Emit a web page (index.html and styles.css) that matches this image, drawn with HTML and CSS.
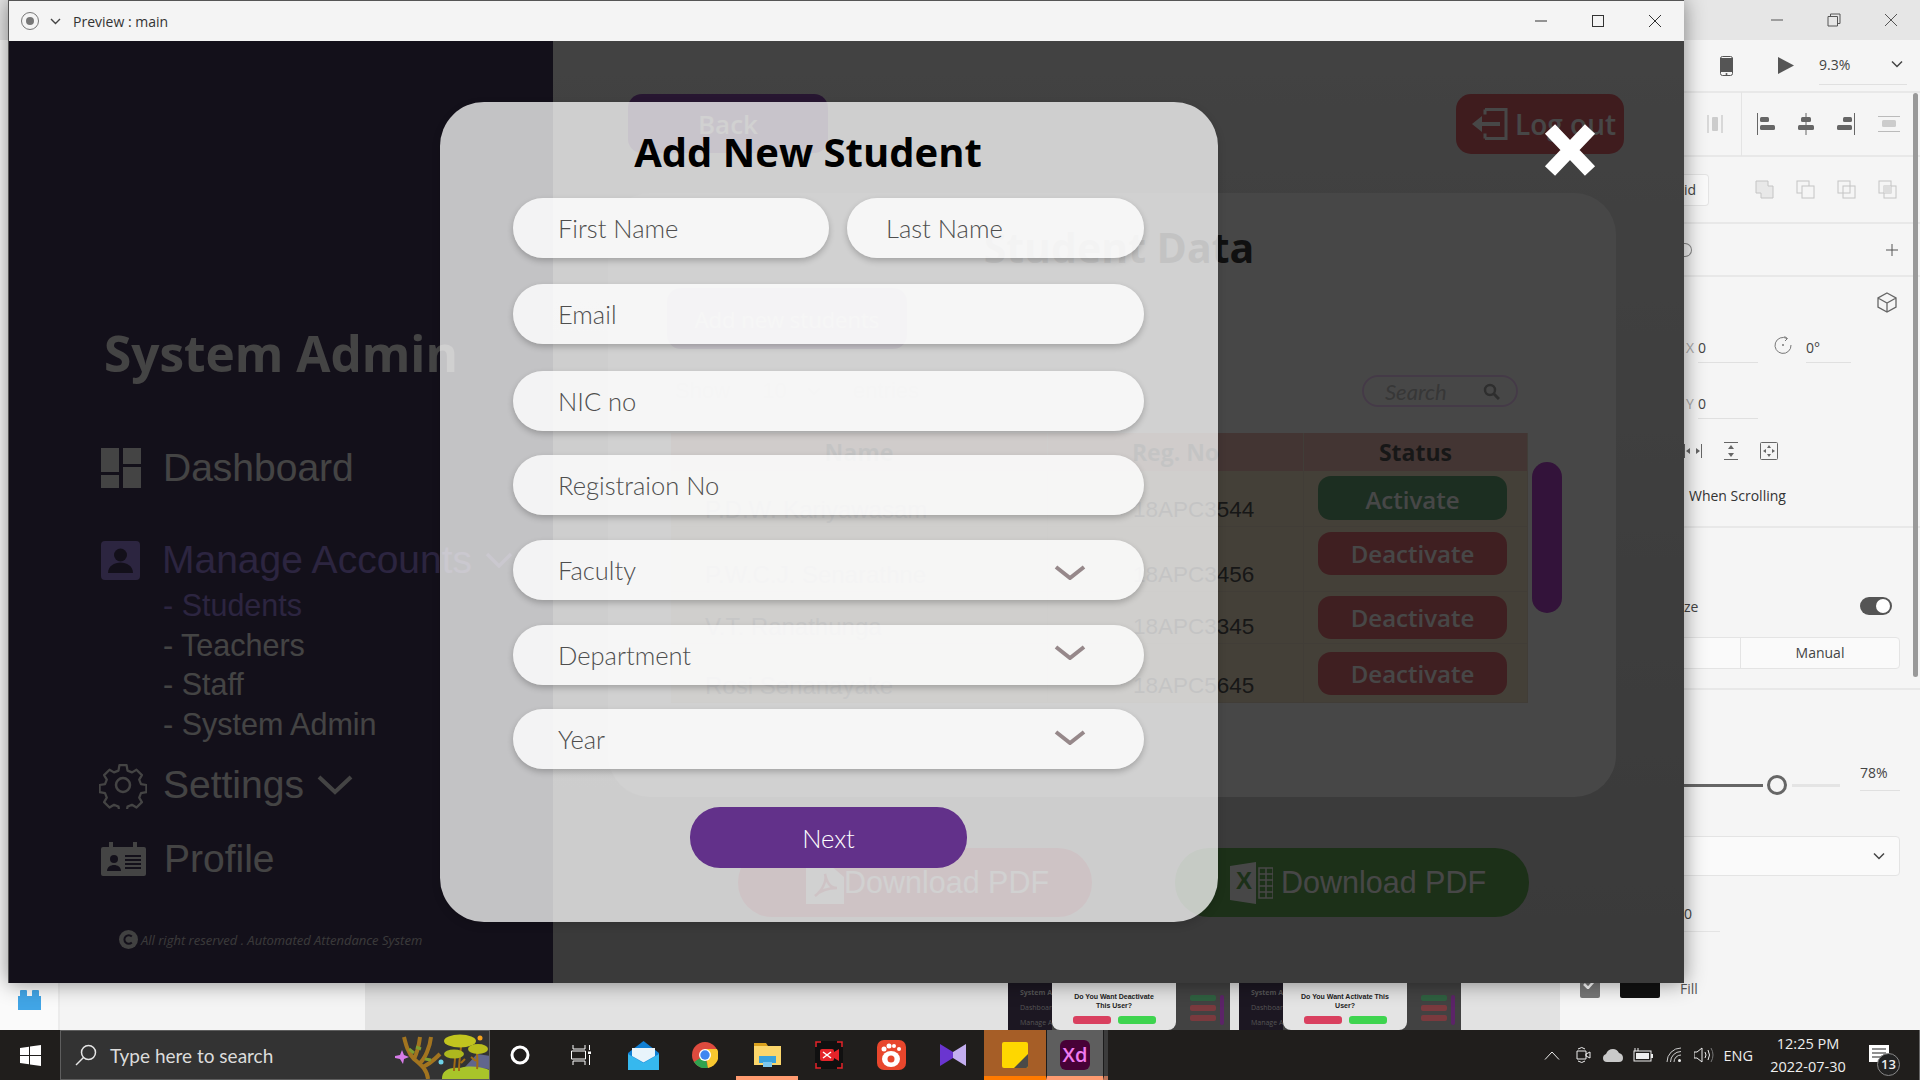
FILE: index.html
```html
<!DOCTYPE html>
<html lang="en">
<head>
  <meta charset="UTF-8">
  <title>Preview : main</title>
  <link rel="stylesheet" href="styles.css">
</head>
<body>
  <!-- editor window behind the preview -->
  <div class="xd">
    <div class="xd-titlebar">
      <svg class="cap" width="14" height="14" viewBox="0 0 14 14"><path d="M1 7h12" stroke="#555" fill="none"/></svg>
      <svg class="cap" width="14" height="14" viewBox="0 0 14 14"><path d="M1 3.500h9.500V13H1zM3.500 3.500V1H13v9.500h-2.500" stroke="#555" fill="none"/></svg>
      <svg class="cap" width="14" height="14" viewBox="0 0 14 14"><path d="M1 1l12 12M13 1L1 13" stroke="#555" fill="none"/></svg>
    </div>
    <div class="xd-body">
      <div class="rail">
        <svg width="23" height="20" viewBox="0 0 23 20"><path d="M0 6h2V1q0-1 1-1h5q1 0 1 1v5h5V1q0-1 1-1h5q1 0 1 1v5h2v14H0z" fill="#41a5e6"/></svg>
      </div>
      <div class="layers"></div>
      <div class="canvas">
        <div class="thumb">
          <div class="thumb-side"><b>System Admin</b><span>Dashboard</span><span>Manage Accounts</span></div>
          <div class="thumb-modal">
            <p>Do You Want Deactivate<br>This User?</p>
            <div class="thumb-btns"><i class="no"></i><i class="yes"></i></div>
          </div>
          <div class="thumb-main"><div class="thumb-col"><i class="go"></i><i></i><i></i></div><span class="thumb-bar"></span></div>
        </div>
        <div class="thumb">
          <div class="thumb-side"><b>System Admin</b><span>Dashboard</span><span>Manage Accounts</span></div>
          <div class="thumb-modal">
            <p>Do You Want Activate This<br>User?</p>
            <div class="thumb-btns"><i class="no"></i><i class="yes"></i></div>
          </div>
          <div class="thumb-main"><div class="thumb-col"><i class="go"></i><i></i><i></i></div><span class="thumb-bar"></span></div>
        </div>
      </div>
      <div class="panel">
        <section class="p-tools">
          <svg width="13" height="20" viewBox="0 0 13 20"><rect x=".5" y=".5" width="12" height="19" rx="2" fill="#f5f5f5" stroke="#555"/><rect y="2" width="13" height="14" fill="#555"/><circle cx="6.500" cy="18" r="1" fill="#555"/></svg>
          <svg class="p-play" width="16" height="17" viewBox="0 0 16 17"><path d="M0 0l16 8.500L0 17z" fill="#555"/></svg>
          <div class="p-zoom"><span>9.3%</span><svg width="12" height="8" viewBox="0 0 12 8"><path d="M1 1.500l5 5 5-5" stroke="#444" stroke-width="1.500" fill="none"/></svg></div>
        </section>
        <section class="p-align">
          <svg class="al-first" width="16" height="20" viewBox="0 0 16 20"><path d="M1 1v18M15 1v18" stroke="#bbb"/><rect x="5" y="3" width="6" height="14" rx="1" fill="#ccc"/></svg>
          <div class="al-sep"></div>
          <svg width="18" height="22" viewBox="0 0 18 22"><path d="M.500 0v22" stroke="#666"/><rect x="3" y="4" width="9" height="5" rx="1.500" fill="#666"/><rect x="3" y="12" width="15" height="5" rx="1.500" fill="#666"/></svg>
          <svg width="16" height="22" viewBox="0 0 16 22"><path d="M8 0v22" stroke="#666"/><rect x="3" y="4" width="10" height="5" rx="1.500" fill="#666"/><rect y="12" width="16" height="5" rx="1.500" fill="#666"/></svg>
          <svg width="18" height="22" viewBox="0 0 18 22"><path d="M17.500 0v22" stroke="#666"/><rect x="6" y="4" width="9" height="5" rx="1.500" fill="#666"/><rect y="12" width="15" height="5" rx="1.500" fill="#666"/></svg>
          <svg width="22" height="16" viewBox="0 0 22 16"><path d="M0 .500h22M0 15.500h22" stroke="#bbb"/><rect x="4" y="4" width="14" height="7" rx="1.500" fill="#ccc"/></svg>
        </section>
        <section class="p-paths">
          <div class="p-chip">id</div>
          <svg width="19" height="19" viewBox="0 0 19 19"><path d="M1 1h12v5h5v12H6v-5H1z" fill="#e8e8e8" stroke="#c4c4c4"/></svg>
          <svg width="19" height="19" viewBox="0 0 19 19"><rect x="1" y="1" width="12" height="12" fill="none" stroke="#c4c4c4"/><rect x="6" y="6" width="12" height="12" fill="#f5f5f5" stroke="#c4c4c4"/></svg>
          <svg width="19" height="19" viewBox="0 0 19 19"><rect x="1" y="1" width="12" height="12" fill="none" stroke="#c4c4c4"/><rect x="6" y="6" width="12" height="12" fill="none" stroke="#c4c4c4"/></svg>
          <svg width="19" height="19" viewBox="0 0 19 19"><rect x="1" y="1" width="12" height="12" fill="none" stroke="#c4c4c4"/><rect x="6" y="6" width="12" height="12" fill="none" stroke="#c4c4c4"/><rect x="6" y="6" width="7" height="7" fill="#ddd"/></svg>
        </section>
        <section class="p-plus">
          <span class="p-ring"></span>
          <svg width="12" height="12" viewBox="0 0 12 12"><path d="M6 0v12M0 6h12" stroke="#555"/></svg>
        </section>
        <section class="p-transform">
          <div class="t-cube">
            <svg width="20" height="21" viewBox="0 0 20 21"><path d="M10 1l9 5v9l-9 5-9-5V6zM1 6l9 5 9-5M10 11v9" stroke="#666" stroke-width="1.300" fill="none"/></svg>
          </div>
          <div class="t-row">
            <span class="t-axis">X</span>
            <span class="t-val">0</span>
            <svg class="t-rot" width="18" height="18" viewBox="0 0 18 18"><path d="M13 2.500A8 8 0 1 0 17 9" stroke="#777" fill="none"/><path d="M10.500.500l3 2-2.500 2.500" stroke="#777" fill="none"/><circle cx="9" cy="9" r="1" fill="#777"/></svg>
            <span class="t-val t-deg">0°</span>
          </div>
          <div class="t-row t-row-y"><span class="t-axis">Y</span><span class="t-val">0</span></div>
          <div class="t-icons">
            <svg width="18" height="16" viewBox="0 0 18 16"><path d="M.500 1v14M17.500 1v14" stroke="#666"/><path d="M2 8l4-3v6zM16 8l-4-3v6z" fill="#666"/></svg>
            <svg width="16" height="18" viewBox="0 0 16 18"><path d="M1 .500h14M1 17.500h14" stroke="#666"/><path d="M8 3l3 4H5zM8 15l3-4H5z" fill="#666"/></svg>
            <svg width="18" height="18" viewBox="0 0 18 18"><rect x=".5" y=".5" width="17" height="17" rx="1" fill="none" stroke="#666"/><path d="M9 3l2 3H7zM9 15l2-3H7zM3 9l3-2v4zM15 9l-3-2v4z" fill="#666"/></svg>
          </div>
          <div class="t-label">When Scrolling</div>
        </section>
        <section class="p-resp">
          <div class="r-toggle-row"><span>ze</span><span class="toggle"><i></i></span></div>
          <div class="r-tabs"><span class="r-tab"></span><span class="r-tab r-tab-on">Manual</span></div>
        </section>
        <section class="p-look">
          <div class="l-slider">
            <span class="l-fill"></span><span class="l-knob"></span><span class="l-rest"></span>
            <span class="l-val">78%</span>
          </div>
          <div class="l-select"><svg width="12" height="8" viewBox="0 0 12 8"><path d="M1 1.500l5 5 5-5" stroke="#444" stroke-width="1.500" fill="none"/></svg></div>
          <div class="l-num">0</div>
          <div class="l-fillrow">
            <span class="l-check"><svg width="14" height="11" viewBox="0 0 14 11"><path d="M1 6l4 4 8-9" stroke="#fff" stroke-width="2.500" fill="none"/></svg></span>
            <span class="l-swatch"></span>
            <span class="l-fillname">Fill</span>
          </div>
        </section>
        <div class="p-scroll"></div>
      </div>
    </div>
  </div>

  <!-- preview window -->
  <div class="preview">
    <div class="pv-title">
      <svg width="20" height="20" viewBox="0 0 20 20"><circle cx="10" cy="10" r="8.500" fill="none" stroke="#777"/><circle cx="10" cy="10" r="4" fill="#777"/></svg>
      <svg class="pv-chev" width="11" height="7" viewBox="0 0 11 7"><path d="M1 1l4.500 4.500L10 1" stroke="#444" stroke-width="1.400" fill="none"/></svg>
      <span class="pv-name">Preview : main</span>
      <div class="pv-caps">
        <svg width="12" height="12" viewBox="0 0 12 12"><path d="M0 6h12" stroke="#333"/></svg>
        <svg width="12" height="12" viewBox="0 0 12 12"><rect x=".5" y=".5" width="11" height="11" fill="none" stroke="#333"/></svg>
        <svg width="12" height="12" viewBox="0 0 12 12"><path d="M0 0l12 12M12 0L0 12" stroke="#333"/></svg>
      </div>
    </div>
    <div class="pv-content">
      <aside class="sidebar">
        <h2 class="side-title">System Admin</h2>
        <div class="side-item side-dash">
          <svg class="side-icon" width="40" height="40" viewBox="0 0 40 40"><path d="M0 0h18v24H0zM22 0h18v16H22zM0 27h18v13H0zM22 19h18v21H22z" fill="#f2f2f2"/></svg>
          <span>Dashboard</span>
        </div>
        <div class="side-item side-on side-manage">
          <svg class="side-icon" width="39" height="39" viewBox="0 0 39 39"><rect width="39" height="39" rx="4" fill="#9d84e4"/><circle cx="19.500" cy="14" r="6.500" fill="#47395d"/><path d="M7 32c0-14 25-14 25 0z" fill="#47395d"/></svg>
          <span>Manage Accounts</span>
          <svg class="side-chev" width="28" height="16" viewBox="0 0 28 16"><path d="M2 2l12 12L26 2" stroke="#9d84e4" stroke-width="3.500" fill="none"/></svg>
        </div>
        <ul class="side-sub">
          <li class="side-on">- Students</li>
          <li>- Teachers</li>
          <li>- Staff</li>
          <li>- System Admin</li>
        </ul>
        <div class="side-item side-settings">
          <svg class="side-icon" width="48" height="48" viewBox="0 0 48 48"><path d="M20 2h8l1 6 5 2 5-3 6 6-3 5 2 5 6 1v8l-6 1-2 5 3 5-6 6-5-3-5 2-1 6h-8l-1-6-5-2-5 3-6-6 3-5-2-5-6-1v-8l6-1 2-5-3-5 6-6 5 3 5-2z" transform="translate(2.400 2.400) scale(.9)" fill="none" stroke="#f2f2f2" stroke-width="2.500" stroke-linejoin="round"/><circle cx="24" cy="24" r="7" fill="none" stroke="#f2f2f2" stroke-width="2.500"/></svg>
          <span>Settings</span>
          <svg class="side-chev-s" width="36" height="20" viewBox="0 0 36 20"><path d="M2 2l16 15L34 2" stroke="#f2f2f2" stroke-width="4" fill="none"/></svg>
        </div>
        <div class="side-item side-profile">
          <svg class="side-icon" width="45" height="34" viewBox="0 0 45 34"><path d="M2 5h6V0h4v5h20V0h4v5h7q2 0 2 2v25q0 2-2 2H2q-2 0-2-2V7q0-2 2-2z" fill="#f2f2f2"/><circle cx="13" cy="17" r="4" fill="#47395d"/><path d="M6 29c0-8 14-8 14 0z" fill="#47395d"/><path d="M24 14h16M24 18h16M24 22h16M24 26h16" stroke="#47395d" stroke-width="2"/></svg>
          <span>Profile</span>
        </div>
        <div class="side-foot">
          <svg width="19" height="19" viewBox="0 0 19 19"><circle cx="9.500" cy="9.500" r="9.500" fill="#e8e8e8"/><path d="M12.800 6.500a4.300 4.300 0 1 0 0 6" stroke="#47395d" stroke-width="2" fill="none"/></svg>
          <em>All right reserved . Automated Attendance System</em>
        </div>
      </aside>

      <main class="main">
        <div class="top-row">
          <button class="btn-back">Back</button>
          <button class="btn-logout">
            <svg width="36" height="32" viewBox="0 0 36 32"><path d="M13 1.500h21v29H13M13 1.500v5M13 30.500v-5" stroke="#fff" stroke-width="3" fill="none"/><path d="M28 16H6" stroke="#fff" stroke-width="4"/><path d="M0 16l10-8v16z" fill="#fff"/></svg>
            <span>Log out</span>
          </button>
        </div>
        <div class="card">
          <h1 class="card-title">Student Data</h1>
          <button class="btn-add">Add new students</button>
          <div class="tools-row">
            <div class="show">Show <span class="show-box">10 <svg width="14" height="8" viewBox="0 0 14 8"><path d="M1 1l6 6 6-6" stroke="#bbb" stroke-width="1.500" fill="none"/></svg></span> entries</div>
            <div class="search">
              <em>Search</em>
              <svg width="17" height="17" viewBox="0 0 17 17"><circle cx="7" cy="7" r="5" fill="none" stroke="#a5a5a5" stroke-width="2.500"/><path d="M11 11l5 5" stroke="#a5a5a5" stroke-width="3"/></svg>
            </div>
          </div>
          <div class="table-wrap">
            <div class="grid">
              <div class="th">Name</div><div class="th">Reg. No</div><div class="th">Status</div>
              <div class="td">P.D.W. Kariyawasam</div><div class="td td-reg">18APC3544</div><div class="td-btn"><span class="st st-on">Activate</span></div>
              <div class="td">P.W.C.J. Senarathne</div><div class="td td-reg">18APC3456</div><div class="td-btn"><span class="st">Deactivate</span></div>
              <div class="td">V.T. Ranathunga</div><div class="td td-reg">18APC3345</div><div class="td-btn td-btn-a"><span class="st">Deactivate</span></div>
              <div class="td">Rosi Senanayake</div><div class="td td-reg">18APC5645</div><div class="td-btn td-btn-b"><span class="st">Deactivate</span></div>
            </div>
            <div class="scroll-thumb"></div>
          </div>
        </div>
        <div class="downloads">
          <button class="dl dl-pdf">
            <svg width="38" height="42" viewBox="0 0 38 42"><path d="M0 3h24l14 12v27H0z" fill="#fff"/><path d="M9 34c8-6 12-16 10-22 2 10 6 14 12 14-8 0-16 2-22 8z" fill="none" stroke="#e0405f" stroke-width="2.500"/></svg>
            <span>Download PDF</span>
          </button>
          <button class="dl dl-xls">
            <svg width="43" height="42" viewBox="0 0 43 42"><path d="M0 4l26-4v42L0 38z" fill="#fff"/><text x="6" y="27" class="xls-x">X</text><path d="M29 6h14v30H29zM29 12h14M29 18h14M29 24h14M29 30h14M36 6v30" fill="none" stroke="#fff" stroke-width="1.500"/></svg>
            <span>Download PDF</span>
          </button>
        </div>
      </main>

      <div class="dim"></div>

      <div class="modal">
        <h1 class="modal-title">Add New Student</h1>
        <div class="form">
          <div class="field-row">
            <div class="field field-first">First Name</div>
            <div class="field field-last">Last Name</div>
          </div>
          <div class="field gap-26">Email</div>
          <div class="field gap-27">NIC no</div>
          <div class="field gap-24">Registraion No</div>
          <div class="field gap-25 field-select"><span>Faculty</span>
            <svg class="sel-low" width="32" height="15" viewBox="0 0 32 15"><path d="M2 2l14 11L30 2" stroke="#96888a" stroke-width="4" fill="none"/></svg>
          </div>
          <div class="field gap-25 field-select"><span>Department</span>
            <svg class="sel-high" width="32" height="15" viewBox="0 0 32 15"><path d="M2 2l14 11L30 2" stroke="#96888a" stroke-width="4" fill="none"/></svg>
          </div>
          <div class="field gap-24 field-select"><span>Year</span>
            <svg class="sel-year" width="32" height="15" viewBox="0 0 32 15"><path d="M2 2l14 11L30 2" stroke="#96888a" stroke-width="4" fill="none"/></svg>
          </div>
          <button class="btn-next">Next</button>
        </div>
      </div>

      <svg class="close-x" width="54" height="56" viewBox="0 0 54 56"><path d="M7 7l40 42M47 7L7 49" stroke="#fff" stroke-width="14"/></svg>
    </div>
  </div>

  <!-- windows taskbar -->
  <footer class="taskbar">
    <div class="tb-start">
      <svg width="21" height="21" viewBox="0 0 21 21"><path d="M0 3l9-1.300V10H0zM10 1.500L21 0v10H10zM0 11h9v8.300L0 18zM10 11h11v10l-11-1.500z" fill="#fff"/></svg>
    </div>
    <div class="tb-search">
      <svg width="22" height="22" viewBox="0 0 22 22"><circle cx="13.500" cy="8.500" r="7" fill="none" stroke="#e6e6e6" stroke-width="1.500"/><path d="M8.500 13.500L1 21" stroke="#e6e6e6" stroke-width="1.500"/></svg>
      <span class="tb-search-text">Type here to search</span>
      <svg class="tb-art" width="95" height="50" viewBox="0 0 95 50">
        <path d="M0 27l5-1 2-5 2 5 5 2-5 2-1 5-3-5-5-1z" fill="#d77ce8"/>
        <path d="M70 38l12-13 13 2v13z" fill="#61668c"/>
        <path d="M33 50C32 40 26 36 19 30 13 24 11 16 9 8M19 30C22 24 24 16 25 8M24 35C30 30 35 18 36 8M27 38C34 36 40 30 45 25" fill="none" stroke="#a2741f" stroke-width="4"/>
        <path d="M14 20l5 4M21 18l5 2M30 30l6 1" stroke="#7f9d2f" stroke-width="3"/>
        <circle cx="46" cy="33" r="2.500" fill="#6fd3e8"/>
        <path d="M47 50c0-8 6-12 18-11 10-3 22-1 30 2v9z" fill="#a9c42a"/>
        <path d="M64 42c0-8 1-16 2-24M82 40c1-6 0-12 0-16M59 42c0-5 1-9 1-13M70 30l-4 4M76 28l5 4" fill="none" stroke="#a36c13" stroke-width="2"/>
        <ellipse cx="65" cy="12" rx="16" ry="6.500" fill="#c2c41f"/><ellipse cx="83" cy="20" rx="10" ry="5" fill="#b9bd1c"/><ellipse cx="59" cy="25" rx="10" ry="4.500" fill="#adb81e"/>
        <circle cx="85" cy="9" r="2.500" fill="#f5a31c"/>
      </svg>
    </div>
    <div class="tb-apps">
      <div class="tb-app tb-first"><svg width="20" height="20" viewBox="0 0 20 20"><circle cx="10" cy="10" r="8" fill="none" stroke="#fff" stroke-width="3"/></svg></div>
      <div class="tb-app"><svg width="20" height="20" viewBox="0 0 20 20"><path d="M2 0v4h12V0M.500 6h14v8H.500zM2 20v-4h12v4M18.500 0v5M18.500 10v10" stroke="#fff" fill="none"/><rect x="17" y="6.500" width="3" height="2.500" fill="#fff"/></svg></div>
      <div class="tb-app"><svg width="31" height="29" viewBox="0 0 31 29"><path d="M0 12L15.500 0 31 12v17H0z" fill="#0f7fd4"/><path d="M0 13l15.500 9L31 13v16H0z" fill="#36b8ee"/><path d="M4 7h23v8l-11.500 6.500L4 15z" fill="#e8f4fb"/></svg></div>
      <div class="tb-app"><svg width="26" height="26" viewBox="0 0 26 26"><circle cx="13" cy="13" r="13" fill="#de4b3e"/><path d="M13 13L2 20A13 13 0 0 0 16 26z" fill="#2fa24f"/><path d="M13 7h12a13 13 0 0 1-9 19z" fill="#f8c72f"/><circle cx="13" cy="13" r="6" fill="#fff"/><circle cx="13" cy="13" r="4.700" fill="#3f86f0"/></svg></div>
      <div class="tb-app tb-open"><svg width="27" height="24" viewBox="0 0 27 24"><path d="M0 0h12l2 3H0z" fill="#d9a11e"/><rect y="3" width="27" height="19" fill="#fbd66b"/><rect x="5" y="13" width="17" height="7" fill="#3aa2dc"/><rect x="9" y="19" width="9" height="5" fill="#7cc7ee"/></svg></div>
      <div class="tb-app"><svg width="28" height="28" viewBox="0 0 28 28"><rect width="28" height="28" rx="4" fill="#101010"/><path d="M1 6V1h5M22 1h5v5M1 22v5h5M22 27h5v-5" stroke="#e5242a" stroke-width="1.500" fill="none"/><rect x="5" y="8" width="14" height="12" rx="2" fill="#e5242a"/><path d="M19 11l5-3v12l-5-3z" fill="#e5242a"/><path d="M8 11l8 6M16 11l-8 6" stroke="#fff" stroke-width="1.500"/></svg></div>
      <div class="tb-app"><svg width="29" height="30" viewBox="0 0 29 30"><rect width="29" height="30" rx="7" fill="#e8462c"/><ellipse cx="14" cy="19" rx="9" ry="8" fill="#fff"/><circle cx="14" cy="19" r="3.500" fill="#e8462c"/><circle cx="7" cy="9" r="2.500" fill="#fff"/><circle cx="12" cy="6" r="2.500" fill="#fff"/><circle cx="17" cy="6" r="2" fill="#fff"/><circle cx="22" cy="9" r="2" fill="#fff"/></svg></div>
      <div class="tb-app"><svg width="26" height="22" viewBox="0 0 26 22"><path d="M0 0l13 8v6L0 22z" fill="#6a35d0"/><path d="M26 0L13 8v6l13 8z" fill="#c3aef0"/></svg></div>
      <div class="tb-app tb-sticky"><svg width="26" height="26" viewBox="0 0 26 26"><rect width="26" height="26" rx="2" fill="#fed700"/><path d="M26 12v12q0 2-2 2H12z" fill="#4a4a48"/></svg></div>
      <div class="tb-app tb-xd"><div class="xd-logo">Xd</div></div>
      <div class="tb-stripe"></div>
    </div>
    <div class="tb-tray">
      <svg width="16" height="9" viewBox="0 0 16 9"><path d="M1 8.500L8 1l7 7.500" stroke="#eee" fill="none"/></svg>
      <svg width="15" height="18" viewBox="0 0 15 18"><path d="M1 5h9v8H1zM10 8l4-2v6l-4-2zM2 3q4-3 7 0M2 15q4 3 7 0" stroke="#eee" fill="none"/></svg>
      <svg width="20" height="13" viewBox="0 0 20 13"><path d="M4 13q-4 0-4-4 0-3 3-4 2-5 7-5 4 0 6 4 4 1 4 5 0 4-4 4z" fill="#c9c9c9"/></svg>
      <svg width="20" height="14" viewBox="0 0 20 14"><rect x="1" y="3" width="17" height="10" fill="none" stroke="#eee"/><rect x="3" y="5" width="13" height="6" fill="#eee"/><rect x="18" y="6" width="2" height="4" fill="#eee"/><path d="M2 0v3M5 0v3" stroke="#eee"/></svg>
      <svg width="16" height="16" viewBox="0 0 16 16"><path d="M1 15A14 14 0 0 1 15 1M4.500 15A10.500 10.500 0 0 1 15 4.500M8 15a7 7 0 0 1 7-7" stroke="#ccc" fill="none"/><circle cx="13.500" cy="13.500" r="1.500" fill="#eee"/></svg>
      <svg width="20" height="16" viewBox="0 0 20 16"><path d="M0 5h3l5-4v14l-5-4H0z" fill="none" stroke="#eee"/><path d="M11 5q2 3 0 6M14 3q3 5 0 10" stroke="#eee" fill="none"/><path d="M17 1q4 7 0 14" stroke="#777" fill="none"/></svg>
      <span class="tb-lang">ENG</span>
      <div class="tb-clock"><span>12:25 PM</span><span>2022-07-30</span></div>
      <div class="tb-note">
        <svg width="20" height="17" viewBox="0 0 20 17"><path d="M0 0h20v17H0z" fill="#fff"/><path d="M3 4h14M3 8h14M3 12h9" stroke="#222" stroke-width="1.200"/></svg>
        <span class="tb-badge">13</span>
      </div>
    </div>
  </footer>
</body>
</html>
```

FILE: styles.css
```css
* { box-sizing: border-box; }
html, body { margin: 0; height: 100%; }
body {
  width: 1920px;
  height: 1080px;
  overflow: hidden;
  display: flex;
  flex-direction: column;
  font-family: "Open Sans", sans-serif;
  background: #f4f4f4;
}
button { font-family: inherit; border: none; padding: 0; }
h1, h2, ul, p { margin: 0; padding: 0; }
li { list-style: none; }

/* editor behind */
.xd { height: 1030px; display: flex; flex-direction: column; }
.xd-titlebar {
  height: 40px;
  flex: none;
  background: #e6e6e6;
  display: flex;
  align-items: center;
  justify-content: flex-end;
  gap: 43px;
  padding-right: 22px;
}
.xd-body { flex: 1; display: flex; min-height: 0; }
.rail {
  width: 60px;
  flex: none;
  background: #fafafa;
  border-right: 2px solid #ececec;
  display: flex;
  flex-direction: column;
  justify-content: flex-end;
  align-items: center;
  padding-bottom: 20px;
}
.layers { width: 305px; flex: none; background: #f4f4f4; }
.canvas {
  flex: 1;
  background: #e2e2e2;
  display: flex;
  align-items: flex-end;
  gap: 9px;
  padding-left: 643px;
}
.panel { width: 360px; flex: none; background: #f5f5f5; display: flex; flex-direction: column; position: relative; }
.p-scroll { position: absolute; right: 2px; top: 53px; width: 5px; height: 584px; border-radius: 3px; background: #999; }

.thumb { width: 222px; height: 47px; display: flex; overflow: hidden; background: #424242; }
.thumb-side {
  width: 44px;
  background: #1c1722;
  color: #555;
  font-size: 7px;
  display: flex;
  flex-direction: column;
  gap: 6px;
  padding: 5px 0 0 12px;
  white-space: nowrap;
}
.thumb-modal {
  width: 124px;
  flex: none;
  background: #e4e4e4;
  border-radius: 0 0 8px 8px;
  text-align: center;
  padding-top: 9px;
}
.thumb-modal p { font-family: "Liberation Sans", sans-serif; font-size: 7px; font-weight: 700; line-height: 9px; color: #222; }
.thumb-btns { display: flex; justify-content: center; gap: 7px; margin-top: 6px; }
.thumb-btns i { width: 38px; height: 8px; border-radius: 3px; }
.thumb-btns .no { background: #d9405f; }
.thumb-btns .yes { background: #3ed44f; }
.thumb-main { flex: 1; display: flex; gap: 4px; padding: 12px 4px 0 14px; }
.thumb-col { display: flex; flex-direction: column; gap: 4px; }
.thumb-col i { height: 6px; width: 26px; background: #7a3a3e; border-radius: 2px; }
.thumb-col .go { background: #2f6040; }
.thumb-bar { width: 4px; height: 30px; border-radius: 2px; background: #5c2468; }

.panel section { padding-left: 124px; border-bottom: 2px solid #e8e8e8; flex: none; }
.p-tools { height: 53px; display: flex; align-items: center; }
.p-play { margin-left: 45px; }
.p-tools > svg:first-child { margin-left: 36px; }
.p-zoom {
  margin-left: 25px;
  width: 88px;
  height: 39px;
  border-bottom: 1px solid #e0e0e0;
  display: flex;
  align-items: center;
  justify-content: space-between;
  padding: 0 4px 2px 0;
  font-size: 14px;
  color: #444;
}
.p-align { height: 64px; display: flex; align-items: center; }
.al-first { margin-left: 23px; }
.al-sep { width: 1px; height: 64px; background: #e4e4e4; margin: 0 15px 0 18px; }
.p-align svg + .al-sep + svg ~ svg { margin-left: 23px; }
.p-paths { height: 67px; display: flex; align-items: center; gap: 22px; }
.p-chip {
  width: 25px;
  height: 32px;
  margin-right: 24px;
  background: #fafafa;
  border: 1px solid #e4e4e4;
  border-left: none;
  border-radius: 0 4px 4px 0;
  font-size: 14px;
  color: #444;
  line-height: 30px;
}
.p-plus { height: 53px; display: flex; align-items: center; justify-content: space-between; padding-right: 22px; }
.p-ring { width: 8px; height: 14px; border: 1px solid #888; border-left: none; border-radius: 0 7px 7px 0; }
.p-transform { height: 251px; padding-top: 15px; }
.t-cube { display: flex; justify-content: flex-end; padding-right: 23px; }
.t-row { display: flex; align-items: flex-start; margin-top: 25px; height: 30px; font-size: 14px; }
.t-axis { width: 14px; padding-left: 2px; color: #aaa; }
.t-val { width: 60px; height: 25px; border-bottom: 1px solid #e0e0e0; font-size: 14px; color: #444; }
.t-rot { margin: -2px 14px 0 16px; }
.t-deg { width: 45px; }
.t-row-y { margin-top: 26px; }
.t-icons { display: flex; gap: 21px; margin-top: 18px; align-items: center; }
.t-label { margin-top: 26px; padding-left: 5px; font-size: 14px; color: #333; }
.p-resp { height: 162px; padding-top: 67px; padding-right: 20px; }
.r-toggle-row { display: flex; justify-content: space-between; align-items: center; height: 22px; font-size: 14px; color: #444; padding-right: 8px; }
.toggle {
  width: 32px;
  height: 18px;
  border-radius: 9px;
  background: #555;
  display: flex;
  justify-content: flex-end;
  align-items: center;
  padding-right: 2px;
}
.toggle i { width: 14px; height: 14px; border-radius: 50%; background: #fff; }
.r-tabs { display: flex; height: 32px; margin-top: 20px; margin-left: -30px; background: #fafafa; border: 1px solid #e4e4e4; border-radius: 4px; }
.r-tab { width: 85px; }
.r-tab-on { flex: 1; border-left: 1px solid #e4e4e4; text-align: center; font-size: 14px; line-height: 30px; color: #444; }
.p-look { flex: 1 !important; border-bottom: none !important; padding-right: 20px; padding-top: 80px; }
.l-slider { display: flex; align-items: center; height: 30px; }
.l-fill { width: 79px; height: 3px; background: #666; margin-right: 4px; }
.l-knob { width: 20px; height: 20px; border-radius: 50%; border: 3px solid #666; background: #f5f5f5; }
.l-rest { width: 48px; height: 3px; background: #e4e4e4; margin-left: 5px; }
.l-val { margin-left: 20px; width: 40px; height: 28px; border-bottom: 1px solid #e0e0e0; font-size: 14px; color: #444; margin-top: -17px; }
.l-select {
  height: 40px;
  margin-top: 36px;
  margin-left: -30px;
  background: #fafafa;
  border: 1px solid #e4e4e4;
  border-radius: 4px;
  display: flex;
  justify-content: flex-end;
  align-items: center;
  padding-right: 14px;
}
.l-num { width: 36px; height: 28px; margin-top: 28px; border-bottom: 1px solid #e4e4e4; font-size: 14px; color: #444; }
.l-fillrow { display: flex; align-items: flex-start; gap: 20px; margin-top: 50px; margin-left: -104px; }
.l-check { width: 20px; height: 20px; background: #777; border-radius: 2px; margin-top: -4px; display: flex; justify-content: center; align-items: flex-start; }
.l-swatch { width: 40px; height: 20px; background: #111; border-radius: 2px; margin-top: -4px; }
.l-fillname { font-size: 14px; color: #555; margin-top: -3px; }

/* preview window */
.preview {
  position: absolute;
  left: 8px;
  top: 0;
  width: 1676px;
  height: 983px;
  display: flex;
  flex-direction: column;
  background: #fff;
  border: solid #555;
  border-width: 1px 0 0 1px;
  box-shadow: 0 0 20px rgba(0, 0, 0, 0.45);
}
.pv-title {
  height: 40px;
  flex: none;
  background: #f4f4f4;
  display: flex;
  align-items: center;
  padding-left: 11px;
}
.pv-chev { margin-left: 10px; }
.pv-name { margin-left: 12px; font-size: 14px; color: #333; }
.pv-caps { margin-left: auto; display: flex; gap: 45px; padding-right: 23px; }
.pv-content { flex: 1; display: flex; position: relative; min-height: 0; }

.sidebar {
  width: 544px;
  flex: none;
  background: #47395d;
  padding: 282px 0 0 92px;
  color: #f4f4f4;
  font-family: "Liberation Sans", sans-serif;
}
.side-title { font-family: "Open Sans", sans-serif; font-size: 49.500px; font-weight: 700; line-height: 60px; padding-left: 3px; white-space: nowrap; }
.side-item { display: flex; align-items: center; height: 44px; font-size: 39px; white-space: nowrap; }
.side-icon { flex: none; margin-right: 22px; }
.side-dash { margin-top: 63px; }
.side-manage { margin-top: 48px; }
.side-settings { margin-top: 19px; }
.side-settings .side-icon { margin: 0 16px 0 -2px; }
.side-profile { margin-top: 30px; }
.side-profile .side-icon { margin-right: 18px; }
.side-on { color: #9d84e4; }
.side-chev { margin-left: 13px; }
.side-chev-s { margin-left: 13px; }
.side-sub { margin: 4px 0 0 62px; font-size: 30.500px; line-height: 39.500px; }
.side-foot { display: flex; align-items: center; gap: 3px; margin: 49px 0 0 18px; font-family: "Open Sans", sans-serif; font-size: 13px; color: #d0d0d0; white-space: nowrap; }

.main {
  flex: 1;
  min-width: 0;
  padding: 53px 60px 0 75px;
  background: linear-gradient(#ececec, #cfcfcf);
  display: flex;
  flex-direction: column;
  font-family: "Liberation Sans", sans-serif;
}
.top-row { display: flex; justify-content: space-between; height: 60px; flex: none; }
.btn-back {
  width: 200px;
  height: 59px;
  border-radius: 14px;
  background: #8b4fb0;
  color: #fff;
  font-family: "Open Sans", sans-serif;
  font-size: 26px;
  font-weight: 600;
}
.btn-logout {
  width: 168px;
  height: 60px;
  border-radius: 15px;
  background: #e1646e;
  color: #fff;
  display: flex;
  align-items: center;
  padding-left: 16px;
  gap: 7px;
  font-family: "Open Sans", sans-serif;
  font-size: 28px;
  font-weight: 600;
  white-space: nowrap;
}
.card {
  flex: none;
  width: 1008px;
  height: 604px;
  margin: 39px 0 0 -20px;
  padding: 24px 0 0 59px;
  background: #fff;
  border-radius: 42px;
}
.card-title {
  font-family: "Open Sans", sans-serif;
  font-size: 41px;
  font-weight: 700;
  line-height: 60px;
  color: #3a3a3a;
  text-align: center;
  margin-left: -59px;
  padding-left: 14px;
}
.btn-add {
  display: block;
  width: 240px;
  height: 61px;
  margin-top: 11px;
  border-radius: 14px;
  background: #8b4fb0;
  color: #fff;
  font-family: "Open Sans", sans-serif;
  font-size: 22px;
}
.tools-row { display: flex; justify-content: space-between; align-items: center; height: 32px; margin-top: 26px; width: 851px; padding-left: 8px; }
.show { font-size: 22px; color: #bbb; display: flex; align-items: center; gap: 8px; }
.show-box { width: 107px; height: 34px; border: 1px solid #e8e8e8; border-radius: 16px; display: flex; align-items: center; justify-content: center; gap: 20px; }
.search {
  width: 156px;
  height: 32px;
  border: 2px solid #f5d0ff;
  border-radius: 16px;
  display: flex;
  align-items: center;
  justify-content: space-between;
  padding: 0 16px 0 21px;
  color: #c4c4c4;
  font-family: "Lato", sans-serif;
  font-size: 22px;
}
.table-wrap { display: flex; gap: 4px; margin-top: 26px; padding-left: 4px; }
.grid {
  display: grid;
  grid-template-columns: 377px 256px 224px;
  grid-template-rows: 38px 56px 65px 52px 59px;
  font-size: 24px;
}
.th {
  background: #f0bdb6;
  border-right: 1px solid #e8dcc8;
  color: #555;
  font-family: "Open Sans", sans-serif;
  font-weight: 700;
  font-size: 23px;
  text-align: center;
  line-height: 38px;
}
.td, .td-btn { background: #f4e6ca; border-bottom: 1px solid #e8dcc4; border-right: 1px solid #e8dcc4; }
.td { display: flex; align-items: flex-end; padding: 0 0 2px 34px; line-height: 28px; color: #777; }
.td-reg { padding-left: 85px; color: #555; font-size: 22.500px; }
.td-btn { display: flex; justify-content: flex-start; align-items: flex-start; padding: 5px 0 0 14px; }
.td-btn-a { padding-top: 4px; }
.td-btn-b { padding-top: 8px; }
.st {
  width: 189px;
  height: 43px;
  border-radius: 13px;
  background: #e27176;
  color: #fff;
  font-family: "Open Sans", sans-serif;
  font-size: 24px;
  font-weight: 600;
  text-align: center;
  line-height: 44px;
}
.st-on { background: #64a476; height: 44px; line-height: 47px; }
.scroll-thumb { width: 30px; height: 151px; margin-top: 29px; border-radius: 15px; background: #b647cf; }
.downloads { display: flex; gap: 83px; margin: 51px 0 0 110px; }
.dl {
  width: 354px;
  height: 69px;
  border-radius: 34px;
  color: #fff;
  display: flex;
  align-items: center;
  font-family: "Liberation Sans", sans-serif;
  font-size: 30.500px;
  white-space: nowrap;
}
.dl-pdf { background: #e0405f; padding-left: 68px; }
.dl-xls { background: #64ab56; padding-left: 55px; gap: 8px; }
.xls-x { font-family: "Liberation Sans", sans-serif; font-size: 24px; font-weight: 700; fill: #64ab56; }

.dim { position: absolute; inset: 0; background: rgba(0, 0, 0, 0.72); }

.modal {
  position: absolute;
  left: 431px;
  top: 61px;
  width: 778px;
  height: 820px;
  padding-top: 20px;
  background: rgba(255, 255, 255, 0.75);
  border-radius: 44px;
  box-shadow: 0 3px 8px rgba(0, 0, 0, 0.15);
}
.modal-title {
  font-family: "Open Sans", sans-serif;
  font-size: 40px;
  font-weight: 700;
  line-height: 60px;
  color: #000;
  text-align: center;
  padding-right: 42px;
}
.form { margin: 16px 74px 0 73px; display: flex; flex-direction: column; }
.field-row { display: flex; gap: 18px; }
.field {
  height: 60px;
  border-radius: 30px;
  background: rgba(255, 255, 255, 0.8);
  box-shadow: 0 3px 6px rgba(0, 0, 0, 0.22);
  padding-left: 45px;
  display: flex;
  align-items: center;
  font-family: "Lato", sans-serif;
  font-size: 25.500px;
  font-weight: 300;
  color: #4e4e4e;
}
.field-first { width: 316px; }
.field-last { flex: 1; padding-left: 39px; }
.field-select { justify-content: space-between; padding-right: 58px; }
.sel-low { margin-top: 4px; }
.sel-high { margin-top: -6px; }
.sel-year { margin-top: -3px; }
.gap-24 { margin-top: 24px; }
.gap-25 { margin-top: 25px; }
.gap-26 { margin-top: 26px; }
.gap-27 { margin-top: 27px; }
.btn-next {
  align-self: center;
  width: 277px;
  height: 61px;
  margin-top: 38px;
  border-radius: 30px;
  background: #62318a;
  color: #fff;
  font-family: "Lato", sans-serif;
  font-size: 25.500px;
  font-weight: 300;
}
.close-x { position: absolute; left: 1534px; top: 81px; }

/* taskbar */
.taskbar {
  height: 50px;
  flex: none;
  display: flex;
  background: #201e1c;
  color: #eee;
}
.tb-start { width: 60px; flex: none; display: flex; align-items: center; justify-content: center; }
.tb-search {
  width: 430px;
  flex: none;
  background: #333;
  border: 1px solid #5e5e5e;
  display: flex;
  align-items: center;
  padding-left: 14px;
  position: relative;
  overflow: hidden;
}
.tb-search-text { margin-left: 13px; font-family: "Lato", sans-serif; font-size: 19px; color: #dcdcdc; }
.tb-art { position: absolute; right: -1px; bottom: 0; }
.tb-apps { display: flex; flex: none; }
.tb-app { width: 62px; height: 50px; display: flex; align-items: center; justify-content: center; border-bottom: 4px solid transparent; padding-top: 4px; }
.tb-first { width: 60px; }
.tb-open { border-bottom-color: #ff9b70; }
.tb-sticky { background: #a65e27; border-bottom-color: #ff7a00; }
.tb-xd { width: 57px; background: #5e5e5e; border-bottom-color: #ff9b70; border-left: 1px solid #1c1c1c; }
.tb-stripe { width: 5px; background: #3c3c3c; border-bottom: 4px solid #b97357; border-left: 1px solid #1c1c1c; }
.xd-logo {
  width: 30px;
  height: 30px;
  border-radius: 6px;
  background: #470137;
  color: #f07af0;
  font-family: "Open Sans", sans-serif;
  font-size: 20px;
  font-weight: 600;
  line-height: 30px;
  text-align: center;
}
.tb-tray { margin-left: auto; display: flex; align-items: center; color: #eee; font-size: 15px; }
.tb-tray svg:nth-child(2) { margin-left: 16px; }
.tb-tray svg:nth-child(3) { margin-left: 12px; }
.tb-tray svg:nth-child(4) { margin-left: 10px; }
.tb-tray svg:nth-child(5) { margin-left: 13px; }
.tb-tray svg:nth-child(6) { margin-left: 12px; }
.tb-lang { margin-left: 9px; font-size: 14.500px; }
.tb-clock { display: flex; flex-direction: column; align-items: center; width: 78px; margin-left: 16px; font-size: 14.500px; line-height: 23px; white-space: nowrap; }
.tb-note { width: 51px; height: 50px; position: relative; margin-left: 22px; padding-top: 15px; border-right: 1px solid #666; }
.tb-badge {
  position: absolute;
  left: 8px;
  top: 23px;
  width: 23px;
  height: 23px;
  border-radius: 50%;
  border: 1px solid #888;
  background: #222;
  color: #eee;
  font-size: 13px;
  font-weight: 600;
  line-height: 21px;
  text-align: center;
}
```
